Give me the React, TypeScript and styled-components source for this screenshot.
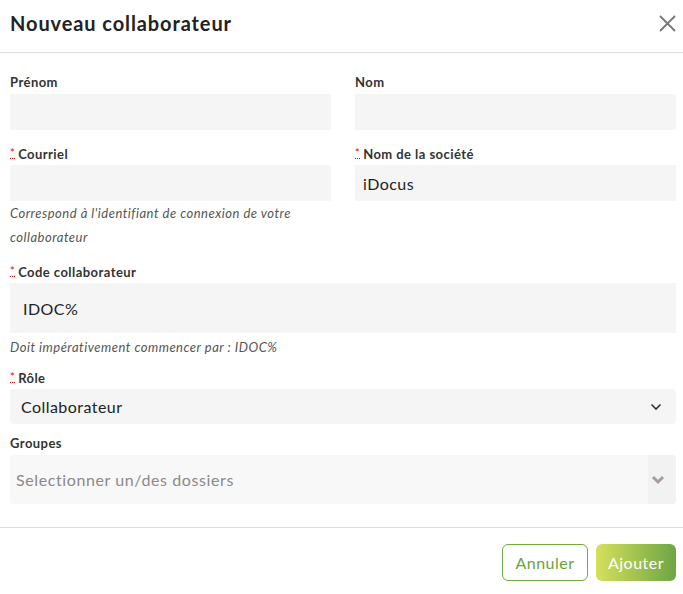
import * as React from "react";
import styled, { createGlobalStyle } from "styled-components";

const GlobalStyle = createGlobalStyle`
  html, body {
    margin: 0;
    padding: 0;
    background: #ffffff;
  }
  body {
    font-family: Lato, "Open Sans", sans-serif;
    color: #222;
  }
`;

const Modal = styled.div`
  width: 683px;
  height: 594px;
  background: #fff;
  display: flex;
  flex-direction: column;
`;

const Header = styled.div`
  height: 53px;
  box-sizing: border-box;
  display: flex;
  align-items: center;
  justify-content: space-between;
  padding: 0 6px 6px 10px;
  border-bottom: 1px solid #dedede;
`;

const Title = styled.h1`
  margin: 0;
  font-size: 20px;
  font-weight: 700;
  letter-spacing: 0.9px;
  color: #222;
`;

const CloseButton = styled.button`
  border: none;
  background: none;
  padding: 0;
  width: 20px;
  height: 20px;
  cursor: pointer;
  display: flex;
  align-items: center;
  justify-content: center;
`;

const Body = styled.div`
  padding: 19px 7px 0 10px;
  display: flex;
  flex-direction: column;
`;

const Row = styled.div`
  display: grid;
  grid-template-columns: 1fr 1fr;
  column-gap: 24px;
`;

const Field = styled.div<{ $gap?: number }>`
  display: flex;
  flex-direction: column;
  margin-bottom: ${(p) => p.$gap ?? 12}px;
`;

const Label = styled.label`
  font-size: 13px;
  font-weight: 700;
  letter-spacing: 0.45px;
  color: #333;
  height: 20px;
  line-height: 20px;
  margin-bottom: 2px;
`;

const Required = styled.abbr`
  color: #e00;
  font-weight: 400;
  text-decoration: underline dotted #e00;
  margin-right: 3px;
  font-size: 11px;
  vertical-align: 2px;
`;

const Input = styled.div<{ $height?: number; $pad?: number }>`
  height: ${(p) => p.$height ?? 36}px;
  background: #f5f5f5;
  display: flex;
  align-items: center;
  padding-left: ${(p) => p.$pad ?? 8}px;
  font-size: 16px;
  letter-spacing: 0.45px;
  color: #222;
  box-sizing: border-box;
`;

const Help = styled.p<{ $top?: number }>`
  margin: ${(p) => p.$top ?? 0}px 0 0;
  font-size: 13px;
  font-style: italic;
  letter-spacing: 0.5px;
  color: #555;
  line-height: 24px;
`;

const Select = styled.div`
  height: 35px;
  background: #f5f5f5;
  border-radius: 4px;
  display: flex;
  align-items: center;
  justify-content: space-between;
  padding: 0 14px 0 11px;
  font-size: 16px;
  letter-spacing: 0.45px;
  color: #222;
`;

const Multi = styled.div`
  height: 49px;
  background: #f8f8f8;
  border-radius: 4px;
  display: flex;
  align-items: stretch;
  overflow: hidden;
`;

const Placeholder = styled.div`
  flex: 1;
  display: flex;
  align-items: center;
  padding-left: 6px;
  font-size: 16px;
  letter-spacing: 0.6px;
  color: #8a8a8a;
`;

const MultiArrow = styled.div`
  width: 28px;
  background: #f2f2f2;
  display: flex;
  align-items: center;
  justify-content: center;
  padding-right: 8px;
  box-sizing: border-box;
`;

const Footer = styled.div`
  margin-top: 23px;
  border-top: 1px solid #dedede;
  padding: 16px 7px 0 10px;
  display: flex;
  justify-content: flex-end;
  gap: 8px;
`;

const Button = styled.button<{ $primary?: boolean }>`
  height: 37px;
  padding: 0 10px;
  border-radius: 6px;
  font-family: inherit;
  font-size: 16px;
  letter-spacing: 0.5px;
  cursor: pointer;
  border: ${(p) => (p.$primary ? "none" : "1px solid #72ab3e")};
  color: ${(p) => (p.$primary ? "#fff" : "#6aa33a")};
  background: ${(p) =>
    p.$primary ? "linear-gradient(90deg, #d6e05c 0%, #6ea544 100%)" : "#fff"};
  min-width: ${(p) => (p.$primary ? 80 : 86)}px;
`;

const Star = () => <Required title="requis">*</Required>;

export default function App() {
  return (
    <>
      <GlobalStyle />
      <Modal>
        <Header>
          <Title>Nouveau collaborateur</Title>
          <CloseButton aria-label="Fermer">
            <svg width="17" height="17" viewBox="0 0 17 17">
              <path d="M1 1L16 16M16 1L1 16" stroke="#777" strokeWidth="1.8" />
            </svg>
          </CloseButton>
        </Header>
        <Body>
          <Row>
            <Field $gap={13}>
              <Label>Prénom</Label>
              <Input />
            </Field>
            <Field $gap={13}>
              <Label>Nom</Label>
              <Input />
            </Field>
          </Row>
          <Row>
            <Field>
              <Label>
                <Star />
                Courriel
              </Label>
              <Input />
              <Help>
                Correspond à l'identifiant de connexion de votre
                <br />
                collaborateur
              </Help>
            </Field>
            <Field>
              <Label>
                <Star />
                Nom de la société
              </Label>
              <Input>iDocus</Input>
            </Field>
          </Row>
          <Field $gap={8}>
            <Label>
              <Star />
              Code collaborateur
            </Label>
            <Input $height={50} $pad={13}>
              IDOC%
            </Input>
            <Help $top={2}>Doit impérativement commencer par : IDOC%</Help>
          </Field>
          <Field $gap={9}>
            <Label>
              <Star />
              Rôle
            </Label>
            <Select>
              <span>Collaborateur</span>
              <svg width="12" height="8" viewBox="0 0 12 8">
                <path
                  d="M1.5 1.5L6 6L10.5 1.5"
                  fill="none"
                  stroke="#333"
                  strokeWidth="1.6"
                />
              </svg>
            </Select>
          </Field>
          <Field $gap={0}>
            <Label>Groupes</Label>
            <Multi>
              <Placeholder>Selectionner un/des dossiers</Placeholder>
              <MultiArrow>
                <svg width="14" height="10" viewBox="0 0 14 10">
                  <path
                    d="M2 2L7 7L12 2"
                    fill="none"
                    stroke="#a99c9c"
                    strokeWidth="3"
                  />
                </svg>
              </MultiArrow>
            </Multi>
          </Field>
        </Body>
        <Footer>
          <Button>Annuler</Button>
          <Button $primary>Ajouter</Button>
        </Footer>
      </Modal>
    </>
  );
}
